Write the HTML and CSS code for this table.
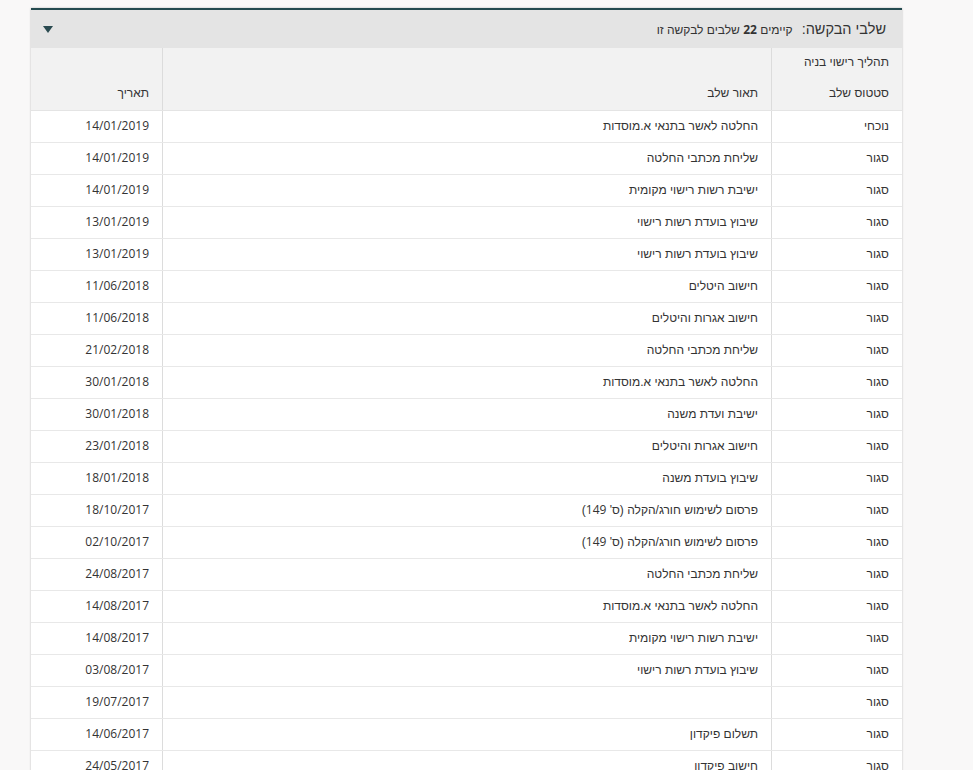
FILE: index.html
```html
<!DOCTYPE html>
<html lang="he" dir="rtl">
<head>
<meta charset="utf-8">
<link rel="stylesheet" href="styles.css">
</head>
<body>
<div class="page">
  <section class="panel">
    <header class="panel-head">
      <h2 class="panel-title">שלבי הבקשה:</h2>
      <span class="panel-sub">קיימים <b class="num">22</b> שלבים לבקשה זו</span>
      <span class="toggle"><svg width="10" height="7" viewBox="0 0 10 7"><path d="M0 0H10L5 7Z" fill="#2a4a50"/></svg></span>
    </header>
    <table class="steps">
      <thead>
        <tr>
          <th class="c-status"><div class="proc">תהליך רישוי בניה</div><div>סטטוס שלב</div></th>
          <th class="c-desc">תאור שלב</th>
          <th class="c-date">תאריך</th>
        </tr>
      </thead>
      <tbody>
        <tr><td>נוכחי</td><td>החלטה לאשר בתנאי א.מוסדות</td><td class="d">14/01/2019</td></tr>
        <tr><td>סגור</td><td>שליחת מכתבי החלטה</td><td class="d">14/01/2019</td></tr>
        <tr><td>סגור</td><td>ישיבת רשות רישוי מקומית</td><td class="d">14/01/2019</td></tr>
        <tr><td>סגור</td><td>שיבוץ בועדת רשות רישוי</td><td class="d">13/01/2019</td></tr>
        <tr><td>סגור</td><td>שיבוץ בועדת רשות רישוי</td><td class="d">13/01/2019</td></tr>
        <tr><td>סגור</td><td>חישוב היטלים</td><td class="d">11/06/2018</td></tr>
        <tr><td>סגור</td><td>חישוב אגרות והיטלים</td><td class="d">11/06/2018</td></tr>
        <tr><td>סגור</td><td>שליחת מכתבי החלטה</td><td class="d">21/02/2018</td></tr>
        <tr><td>סגור</td><td>החלטה לאשר בתנאי א.מוסדות</td><td class="d">30/01/2018</td></tr>
        <tr><td>סגור</td><td>ישיבת ועדת משנה</td><td class="d">30/01/2018</td></tr>
        <tr><td>סגור</td><td>חישוב אגרות והיטלים</td><td class="d">23/01/2018</td></tr>
        <tr><td>סגור</td><td>שיבוץ בועדת משנה</td><td class="d">18/01/2018</td></tr>
        <tr><td>סגור</td><td>פרסום לשימוש חורג/הקלה (ס' <span class="num">149</span>)</td><td class="d">18/10/2017</td></tr>
        <tr><td>סגור</td><td>פרסום לשימוש חורג/הקלה (ס' <span class="num">149</span>)</td><td class="d">02/10/2017</td></tr>
        <tr><td>סגור</td><td>שליחת מכתבי החלטה</td><td class="d">24/08/2017</td></tr>
        <tr><td>סגור</td><td>החלטה לאשר בתנאי א.מוסדות</td><td class="d">14/08/2017</td></tr>
        <tr><td>סגור</td><td>ישיבת רשות רישוי מקומית</td><td class="d">14/08/2017</td></tr>
        <tr><td>סגור</td><td>שיבוץ בועדת רשות רישוי</td><td class="d">03/08/2017</td></tr>
        <tr><td>סגור</td><td></td><td class="d">19/07/2017</td></tr>
        <tr><td>סגור</td><td>תשלום פיקדון</td><td class="d">14/06/2017</td></tr>
        <tr><td>סגור</td><td>חישוב פיקדון</td><td class="d">24/05/2017</td></tr>
        <tr><td>סגור</td><td>פתיחת בקשה</td><td class="d">24/05/2017</td></tr>
      </tbody>
    </table>
  </section>
</div>
</body>
</html>
```
FILE: styles.css
```css
html, body {
  margin: 0;
  padding: 0;
  background: #f9f8f8;
}
body {
  font-family: "Liberation Sans", Arial, sans-serif;
  color: #333;
  font-size: 12px;
}
.num, .d {
  font-family: "Open Sans", sans-serif;
}
.page {
  padding: 8px 71px 0 31px;
}
.panel {
  background: #fff;
  border-top: 2px solid #244b50;
  box-shadow: 0 0 2px rgba(0,0,0,0.25);
}
.panel-head {
  display: flex;
  align-items: center;
  height: 38px;
  background: #e4e4e4;
  padding: 0 16px 0 12px;
}
.panel-title {
  margin: 0;
  font-weight: 400;
  font-size: 14.5px;
  color: #333;
}
.panel-sub {
  margin-right: 9px;
  font-size: 12px;
}
.panel-sub b {
  font-weight: 700;
  font-size: 12px;
}
.toggle {
  margin-right: auto;
  display: flex;
}
.steps {
  width: 100%;
  border-collapse: collapse;
  table-layout: fixed;
}
.steps th {
  background: #f2f2f2;
  font-weight: 400;
  text-align: right;
  vertical-align: bottom;
  padding: 0 13px 10px 13px;
  height: 52px;
  line-height: 14px;
  border-bottom: 1px solid #e4e4e4;
}
.steps .proc {
  margin-bottom: 17px;
}
.steps th + th, .steps td + td {
  border-right: 1px solid #dcdcdc;
}
.c-status { width: 104px; }
.c-date { width: 105px; }
.steps td {
  height: 29px;
  padding: 0 13px 2px;
  text-align: right;
  border-bottom: 1px solid #e8e8e8;
}
```
